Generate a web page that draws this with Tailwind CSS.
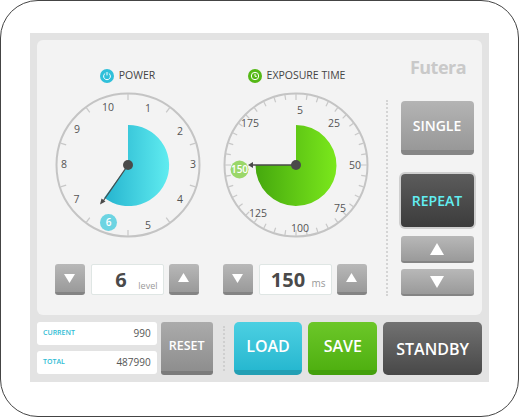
<!doctype html>
<html><head><meta charset="utf-8"><script src="https://cdn.jsdelivr.net/npm/@tailwindcss/browser@4"></script></head>
<body class="bg-white font-['Open_Sans',sans-serif]">
<div class="w-[519px] h-[417px] border-[1.5px] border-[#444] rounded-[38px] bg-white pt-[32px] pl-[29px] overflow-hidden">
 <div class="w-[459px] h-[349px] bg-[#e3e3e3] p-[7px] flex flex-col gap-[7px]">
  <div class="h-[276px] bg-[#f3f3f3] rounded-[6px] flex pl-[18px]">
   <div class="w-[146px] flex flex-col">
    <div class="h-[52px] pt-[20px] flex items-center justify-center gap-[5px] text-[10.5px] text-[#444] pr-[1px]">
     <span class="w-[14px] h-[14px] rounded-full bg-[#2fc0da] flex items-center justify-center">
      <svg width="10" height="10" viewBox="0 0 10 10" fill="none" stroke="#fff" stroke-width="1"><path d="M3.2 2.4a3.4 3.4 0 1 0 3.6 0M5 1v3.4"/></svg></span>
     <span>POWER</span>
    </div>
    <svg width="146" height="146" viewBox="0 0 146 146" class="block" font-size="10.5" fill="#555" text-anchor="middle">
     <defs><linearGradient id="a" x1="0" x2="1"><stop offset="0" stop-color="#25b4cf"/><stop offset="1" stop-color="#60ecf0"/></linearGradient></defs>
     <circle cx="73" cy="73" r="71.5" fill="none" stroke="#c4c4c4" stroke-width="2"/>
     <g stroke="#c8c8c8" stroke-width="1.2">
      <line x1="73" y1="2" x2="73" y2="8" transform="rotate(0 73 73)"/><line x1="73" y1="2" x2="73" y2="8" transform="rotate(36 73 73)"/><line x1="73" y1="2" x2="73" y2="8" transform="rotate(72 73 73)"/><line x1="73" y1="2" x2="73" y2="8" transform="rotate(108 73 73)"/><line x1="73" y1="2" x2="73" y2="8" transform="rotate(144 73 73)"/><line x1="73" y1="2" x2="73" y2="8" transform="rotate(180 73 73)"/><line x1="73" y1="2" x2="73" y2="8" transform="rotate(216 73 73)"/><line x1="73" y1="2" x2="73" y2="8" transform="rotate(252 73 73)"/><line x1="73" y1="2" x2="73" y2="8" transform="rotate(288 73 73)"/><line x1="73" y1="2" x2="73" y2="8" transform="rotate(324 73 73)"/>
     </g>
     <path d="M73 33A40.5 40.5 0 1 1 49.2 105.8L73 73Z" fill="url(#a)"/>
     <text x="93" y="20">1</text><text x="125" y="43">2</text><text x="138" y="76">3</text><text x="125" y="111">4</text><text x="93" y="137">5</text>
     <text x="21.500" y="111">7</text><text x="9" y="76">8</text><text x="22" y="41">9</text><text x="53" y="19">10</text>
     <circle cx="53.500" cy="130.500" r="8.500" fill="#6cd4e2"/><text x="53.500" y="134" fill="#fff" font-weight="600" font-size="10">6</text>
     <line x1="73" y1="73" x2="47.500" y2="110" stroke="#4a4a4a" stroke-width="1.300"/><path d="M45 112.500l1.500-6 4 3Z" fill="#4a4a4a"/>
     <circle cx="73" cy="73" r="5" fill="#4a4a4a"/>
    </svg>
    <div class="mt-[26px] flex gap-[5.500px]">
     <button class="w-[30px] h-[31px] rounded-[3px] bg-linear-to-b from-[#b8b8b8] to-[#9a9a9a] border-b-[3px] border-[#848484] flex items-center justify-center"><svg width="12" height="10"><path d="M0 1h11L5.500 10Z" fill="#fff"/></svg></button>
     <div class="w-[73px] h-[31px] bg-white rounded-[2px] border border-[#dfe6e4] relative flex items-center justify-center text-[#4a4a4a]"><span class="text-[20px] font-bold mr-[12px]">6</span><span class="absolute right-[5px] bottom-[2px] text-[9px] text-[#999]">level</span></div>
     <button class="w-[30px] h-[31px] rounded-[3px] bg-linear-to-b from-[#b8b8b8] to-[#9a9a9a] border-b-[3px] border-[#848484] flex items-center justify-center"><svg width="12" height="10"><path d="M0 9h11L5.500 0Z" fill="#fff"/></svg></button>
    </div>
   </div>
   <div class="w-[146px] ml-[22px] flex flex-col">
    <div class="h-[52px] pt-[20px] flex items-center justify-center gap-[5px] text-[10.5px] text-[#444] pl-[1px]">
     <span class="w-[14px] h-[14px] rounded-full bg-[#55b816] flex items-center justify-center">
      <svg width="10" height="10" viewBox="0 0 10 10" fill="none" stroke="#fff" stroke-width="1"><circle cx="5" cy="5" r="3.700"/><path d="M5 2.800V5.300H6.800"/></svg></span>
     <span>EXPOSURE TIME</span>
    </div>
    <svg width="146" height="146" viewBox="0 0 146 146" class="block" font-size="10.5" fill="#555" text-anchor="middle">
     <defs><linearGradient id="b" x1="0" x2="1"><stop offset="0" stop-color="#45a80e"/><stop offset="1" stop-color="#7be81c"/></linearGradient></defs>
     <circle cx="73" cy="73" r="71.5" fill="none" stroke="#c4c4c4" stroke-width="2"/>
     <g stroke="#c8c8c8" stroke-width="1.2">
      <line x1="73" y1="2" x2="73" y2="8"/><line x1="73" y1="2" x2="73" y2="7" transform="rotate(9 73 73)"/><line x1="73" y1="2" x2="73" y2="7" transform="rotate(18 73 73)"/><line x1="73" y1="2" x2="73" y2="7" transform="rotate(27 73 73)"/><line x1="73" y1="2" x2="73" y2="7" transform="rotate(36 73 73)"/><line x1="73" y1="2" x2="73" y2="7" transform="rotate(45 73 73)"/><line x1="73" y1="2" x2="73" y2="7" transform="rotate(54 73 73)"/><line x1="73" y1="2" x2="73" y2="7" transform="rotate(63 73 73)"/><line x1="73" y1="2" x2="73" y2="7" transform="rotate(72 73 73)"/><line x1="73" y1="2" x2="73" y2="7" transform="rotate(81 73 73)"/><line x1="73" y1="2" x2="73" y2="8" transform="rotate(90 73 73)"/><line x1="73" y1="2" x2="73" y2="7" transform="rotate(99 73 73)"/><line x1="73" y1="2" x2="73" y2="7" transform="rotate(108 73 73)"/><line x1="73" y1="2" x2="73" y2="7" transform="rotate(117 73 73)"/><line x1="73" y1="2" x2="73" y2="7" transform="rotate(126 73 73)"/><line x1="73" y1="2" x2="73" y2="7" transform="rotate(135 73 73)"/><line x1="73" y1="2" x2="73" y2="7" transform="rotate(144 73 73)"/><line x1="73" y1="2" x2="73" y2="7" transform="rotate(153 73 73)"/><line x1="73" y1="2" x2="73" y2="7" transform="rotate(162 73 73)"/><line x1="73" y1="2" x2="73" y2="7" transform="rotate(171 73 73)"/><line x1="73" y1="2" x2="73" y2="8" transform="rotate(180 73 73)"/><line x1="73" y1="2" x2="73" y2="7" transform="rotate(189 73 73)"/><line x1="73" y1="2" x2="73" y2="7" transform="rotate(198 73 73)"/><line x1="73" y1="2" x2="73" y2="7" transform="rotate(207 73 73)"/><line x1="73" y1="2" x2="73" y2="7" transform="rotate(216 73 73)"/><line x1="73" y1="2" x2="73" y2="7" transform="rotate(225 73 73)"/><line x1="73" y1="2" x2="73" y2="7" transform="rotate(234 73 73)"/><line x1="73" y1="2" x2="73" y2="7" transform="rotate(243 73 73)"/><line x1="73" y1="2" x2="73" y2="7" transform="rotate(252 73 73)"/><line x1="73" y1="2" x2="73" y2="7" transform="rotate(261 73 73)"/><line x1="73" y1="2" x2="73" y2="8" transform="rotate(270 73 73)"/><line x1="73" y1="2" x2="73" y2="7" transform="rotate(279 73 73)"/><line x1="73" y1="2" x2="73" y2="7" transform="rotate(288 73 73)"/><line x1="73" y1="2" x2="73" y2="7" transform="rotate(297 73 73)"/><line x1="73" y1="2" x2="73" y2="7" transform="rotate(306 73 73)"/><line x1="73" y1="2" x2="73" y2="7" transform="rotate(315 73 73)"/><line x1="73" y1="2" x2="73" y2="7" transform="rotate(324 73 73)"/><line x1="73" y1="2" x2="73" y2="7" transform="rotate(333 73 73)"/><line x1="73" y1="2" x2="73" y2="7" transform="rotate(342 73 73)"/><line x1="73" y1="2" x2="73" y2="7" transform="rotate(351 73 73)"/>
     </g>
     <path d="M73 33A40.500 40.500 0 1 1 32.500 73L73 73Z" fill="url(#b)"/>
     <text x="77" y="22">5</text><text x="111" y="35">25</text><text x="132" y="77">50</text><text x="117" y="120">75</text><text x="77" y="140">100</text><text x="35" y="125">125</text><text x="27" y="35">175</text>
     <circle cx="16.500" cy="77.500" r="9" fill="#9ad769"/><text x="16.500" y="81" fill="#fff" font-weight="600" font-size="10">150</text>
     <line x1="73" y1="73" x2="28" y2="73" stroke="#4a4a4a" stroke-width="1.300"/><path d="M25 73l5-3v6Z" fill="#4a4a4a"/>
     <circle cx="73" cy="73" r="5" fill="#4a4a4a"/>
    </svg>
    <div class="mt-[26px] flex gap-[5.500px]">
     <button class="w-[30px] h-[31px] rounded-[3px] bg-linear-to-b from-[#b8b8b8] to-[#9a9a9a] border-b-[3px] border-[#848484] flex items-center justify-center"><svg width="12" height="10"><path d="M0 1h11L5.500 10Z" fill="#fff"/></svg></button>
     <div class="w-[73px] h-[31px] bg-white rounded-[2px] border border-[#dfe6e4] relative flex items-center justify-center text-[#4a4a4a]"><span class="text-[20px] font-bold mr-[14px]">150</span><span class="absolute right-[5px] bottom-[3px] text-[10px] text-[#999]">ms</span></div>
     <button class="w-[30px] h-[31px] rounded-[3px] bg-linear-to-b from-[#b8b8b8] to-[#9a9a9a] border-b-[3px] border-[#848484] flex items-center justify-center"><svg width="12" height="10"><path d="M0 9h11L5.500 0Z" fill="#fff"/></svg></button>
    </div>
   </div>
   <div class="ml-[16.500px] mt-[60px] h-[196px] border-l-[2px] border-dotted border-[#d4d4d4]"></div>
   <div class="ml-[13px] w-[73px] flex flex-col">
    <div class="h-[61px] pt-[14px] text-center text-[18px] leading-[26px] font-bold text-[#c9c9c9] tracking-[-0.5px] pl-[2px]">Futera</div>
    <button class="h-[54px] rounded-[4px] bg-linear-to-b from-[#b4b4b4] to-[#989898] border-b-[5px] border-[#868686] text-white font-semibold text-[14px]">SINGLE</button>
    <button class="mt-[19px] h-[53px] rounded-[4px] bg-linear-to-b from-[#5c5c5c] to-[#3c3c3c] ring-2 ring-[#cfcfcf] text-[#62eef2] font-semibold text-[14px]">REPEAT</button>
    <button class="mt-[9px] h-[27px] rounded-[3px] bg-linear-to-b from-[#b8b8b8] to-[#9a9a9a] border-b-[2px] border-[#848484] flex items-center justify-center"><svg width="14" height="12"><path d="M0 12h14L7 0Z" fill="#fff"/></svg></button>
    <button class="mt-[6px] h-[27px] rounded-[3px] bg-linear-to-b from-[#b8b8b8] to-[#9a9a9a] border-b-[2px] border-[#848484] flex items-center justify-center"><svg width="14" height="12"><path d="M0 0h14L7 12Z" fill="#fff"/></svg></button>
   </div>
  </div>
  <div class="h-[53px] flex">
   <div class="w-[120px] flex flex-col gap-[6px]">
    <div class="h-[23px] bg-white rounded-[3px] flex items-center justify-between px-[6px]"><span class="text-[7px] font-semibold text-[#2fbcd4]">CURRENT</span><span class="text-[10px] text-[#555]">990</span></div>
    <div class="h-[23px] bg-white rounded-[3px] flex items-center justify-between px-[6px]"><span class="text-[7px] font-semibold text-[#2fbcd4]">TOTAL</span><span class="text-[10px] text-[#555]">487990</span></div>
   </div>
   <button class="ml-[4px] w-[52px] rounded-[3px] bg-linear-to-b from-[#ababab] to-[#8e8e8e] border-b-[4px] border-[#7b7b7b] text-white font-semibold text-[12.5px]">RESET</button>
   <div class="ml-[10px] my-[4px] border-l-[2px] border-dotted border-[#cfcfcf]"></div>
   <button class="ml-[9px] w-[69px] rounded-[5px] bg-linear-to-b from-[#4bd0e2] to-[#26b8d0] border-b-[5px] border-[#239fb4] text-white font-semibold text-[16px]">LOAD</button>
   <button class="ml-[6px] w-[69px] rounded-[5px] bg-linear-to-b from-[#6cc728] to-[#4fb010] border-b-[5px] border-[#43a00c] text-white font-semibold text-[16px]">SAVE</button>
   <button class="ml-[6px] w-[99px] rounded-[5px] bg-linear-to-b from-[#727272] to-[#484848] text-white font-semibold text-[16px]">STANDBY</button>
  </div>
 </div>
</div>
</body></html>
